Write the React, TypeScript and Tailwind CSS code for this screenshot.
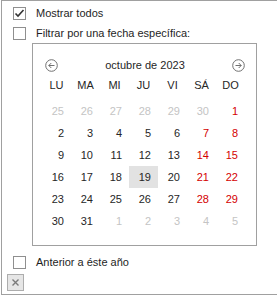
const DAY_NAMES = ["LU", "MA", "MI", "JU", "VI", "SÁ", "DO"];

type Day = { n: number; muted?: boolean; red?: boolean; selected?: boolean };

const WEEKS: Day[][] = [
  [{ n: 25, muted: true }, { n: 26, muted: true }, { n: 27, muted: true }, { n: 28, muted: true }, { n: 29, muted: true }, { n: 30, muted: true }, { n: 1, red: true }],
  [{ n: 2 }, { n: 3 }, { n: 4 }, { n: 5 }, { n: 6 }, { n: 7, red: true }, { n: 8, red: true }],
  [{ n: 9 }, { n: 10 }, { n: 11 }, { n: 12 }, { n: 13 }, { n: 14, red: true }, { n: 15, red: true }],
  [{ n: 16 }, { n: 17 }, { n: 18 }, { n: 19, selected: true }, { n: 20 }, { n: 21, red: true }, { n: 22, red: true }],
  [{ n: 23 }, { n: 24 }, { n: 25 }, { n: 26 }, { n: 27 }, { n: 28, red: true }, { n: 29, red: true }],
  [{ n: 30 }, { n: 31 }, { n: 1, muted: true }, { n: 2, muted: true }, { n: 3, muted: true }, { n: 4, muted: true }, { n: 5, muted: true }],
];

function CheckBox({ checked }: { checked?: boolean }) {
  return (
    <span className="flex h-[13px] w-[13px] shrink-0 items-center justify-center border border-[#8f8f8f] bg-white">
      {checked && (
        <svg width="11" height="11" viewBox="0 0 11 11" fill="none" stroke="#333333" strokeWidth="1.6">
          <path d="M1.5 5.5l2.5 2.5 5.5-6" />
        </svg>
      )}
    </span>
  );
}

function CheckRow({ label, checked }: { label: string; checked?: boolean }) {
  return (
    <div className="flex h-[13px] items-center gap-[10px]">
      <CheckBox checked={checked} />
      <span className="leading-[13px]">{label}</span>
    </div>
  );
}

function NavArrow({ dir }: { dir: "left" | "right" }) {
  return (
    <svg width="13" height="13" viewBox="0 0 13 13" fill="none" stroke="#707070" strokeWidth="1">
      <circle cx="6.5" cy="6.5" r="5.8" />
      {dir === "left" ? (
        <path d="M9.5 6.5H3.8M6.3 4L3.8 6.5L6.3 9" />
      ) : (
        <path d="M3.5 6.5H9.2M6.7 4L9.2 6.5L6.7 9" />
      )}
    </svg>
  );
}

export default function App() {
  return (
    <div className="h-[296px] w-[277px] overflow-hidden bg-white pl-px text-[11px] text-[#1e1e1e] [font-family:'Liberation_Sans',Arial,sans-serif]">
      <div className="flex h-[295px] flex-col border-b border-l border-t border-[#a0a0a0] pl-[11px] pt-[6px]">
        <CheckRow label="Mostrar todos" checked />
        <div className="mt-[7px]">
          <CheckRow label="Filtrar por una fecha específica:" />
        </div>

        {/* calendar */}
        <div className="ml-[19px] mt-[3px] h-[203px] w-[225px] border border-[#a0a0a0]">
          <div className="flex h-[13px] items-center justify-between pl-[12px] pr-[11px] mt-[15px]">
            <NavArrow dir="left" />
            <span className="leading-[13px] text-[#262626]">octubre de 2023</span>
            <NavArrow dir="right" />
          </div>
          <div className="ml-[9px] mt-[6px] grid grid-cols-[repeat(7,29px)]">
            {DAY_NAMES.map((d) => (
              <div key={d} className="h-[14px] text-center leading-[14px] text-[#262626]">
                {d}
              </div>
            ))}
          </div>
          <div className="ml-[9px] mt-[8px] grid grid-cols-[repeat(7,29px)]">
            {WEEKS.flat().map((day, i) => (
              <div
                key={i}
                className={`h-[22px] pr-[7px] text-right leading-[22px] ${
                  day.selected ? "bg-[#e2e2e2]" : ""
                } ${day.muted ? "text-[#c4c4c4]" : day.red ? "text-[#d40000]" : "text-[#262626]"}`}
              >
                {day.n}
              </div>
            ))}
          </div>
        </div>

        <div className="mt-[10px]">
          <CheckRow label="Anterior a éste año" />
        </div>

        <div className="-ml-[6px] mt-[5px] flex h-[17px] w-[17px] items-center justify-center border border-[#adadad] bg-[#e6e6e6]">
          <svg width="9" height="9" viewBox="0 0 9 9" stroke="#7a7a7a" strokeWidth="1.4">
            <path d="M1.5 1.5l6 6M7.5 1.5l-6 6" />
          </svg>
        </div>
      </div>
    </div>
  );
}
